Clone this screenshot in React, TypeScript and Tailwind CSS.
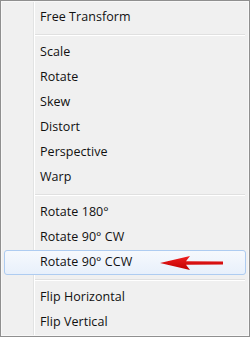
import React from "react";

const Item = ({ label, active }: { label: string; active?: boolean }) => (
  <div className="relative h-[25px] flex items-center">
    {active && (
      <div className="absolute left-[2px] right-[2px] top-0 bottom-0 rounded-[3px] border border-[#aeccf1] bg-gradient-to-b from-[#f6f9fd] to-[#e8f0fb]" />
    )}
    <span className="relative pl-[38px] text-[12.5px] text-[#111] tracking-[0.05px]">{label}</span>
    {active && (
      <svg className="absolute left-[155px] top-[5px]" width="70" height="16" viewBox="0 0 70 16">
        <defs>
          <linearGradient id="rg" x1="0" y1="0" x2="0" y2="1">
            <stop offset="0" stopColor="#f02020" />
            <stop offset="1" stopColor="#c00000" />
          </linearGradient>
        </defs>
        <path d="M3 8 L33 1 L29 6.3 L66 6.6 L66 9.4 L29 9.7 L33 15 Z" fill="url(#rg)" />
      </svg>
    )}
  </div>
);

const Sep = () => (
  <div className="h-[10px] flex items-center pl-[33px] pr-[3px]">
    <div className="w-full h-[2px] border-t border-[#e0e0e0] border-b border-b-white" />
  </div>
);

export default function App() {
  return (
    <div
      className="w-[250px] h-[337px] bg-[#8f8f8f] p-[1px]"
      style={{ fontFamily: '"Open Sans", "Noto Sans", sans-serif' }}
    >
      <div className="relative w-full h-[335px] bg-[#f0f0f0] border border-[#f8f8f8] pt-[3px] overflow-hidden">
        <div className="absolute left-[31px] top-0 bottom-0 w-[2px] border-l border-[#e2e3e3] border-r border-r-white" />
        <Item label="Free Transform" />
        <Sep />
        <Item label="Scale" />
        <Item label="Rotate" />
        <Item label="Skew" />
        <Item label="Distort" />
        <Item label="Perspective" />
        <Item label="Warp" />
        <Sep />
        <Item label="Rotate 180°" />
        <Item label="Rotate 90° CW" />
        <Item label="Rotate 90° CCW" active />
        <Sep />
        <Item label="Flip Horizontal" />
        <Item label="Flip Vertical" />
      </div>
    </div>
  );
}
